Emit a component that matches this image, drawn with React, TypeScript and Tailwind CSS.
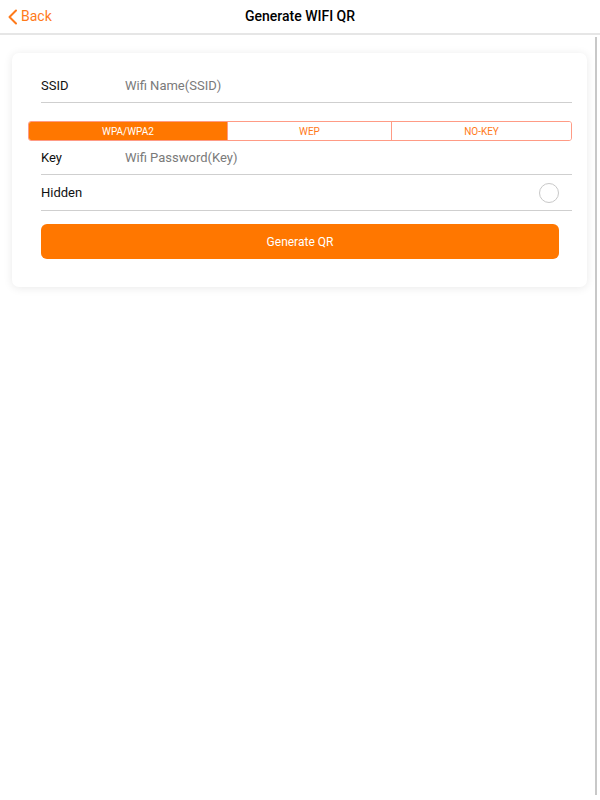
import React, { useState } from "react";

const ORANGE = "#ff7700";

export default function App() {
  const [mode, setMode] = useState("WPA/WPA2");
  const [hidden, setHidden] = useState(false);
  const modes = ["WPA/WPA2", "WEP", "NO-KEY"];

  return (
    <div className="w-[600px] h-[800px] bg-white font-['Roboto','Noto_Sans',sans-serif] flex flex-col overflow-hidden">
      {/* Nav bar */}
      <header className="relative h-[35px] shrink-0 flex items-center border-b-2 border-[#e6e6e6] bg-white">
        <button className="flex items-center pl-[7px] text-[#ff7a1a] text-[14px]">
          <svg width="11" height="16" viewBox="0 0 11 16" className="mr-[3px]">
            <path d="M9 1.5 L2.5 8 L9 14.5" fill="none" stroke="#ff7a1a" strokeWidth="2" strokeLinecap="round" strokeLinejoin="round" />
          </svg>
          Back
        </button>
        <h1 className="absolute left-0 right-0 text-center text-[14px] font-medium text-black pointer-events-none">
          Generate WIFI QR
        </h1>
      </header>

      {/* Body */}
      <div className="flex-1 flex">
        <main className="flex-1 pt-[18px] pl-[12px] pr-[8px]">
          <div className="bg-white rounded-[7px] shadow-[0_1px_10px_rgba(0,0,0,0.09)] pt-[17px] pb-[28px]">
            <div className="ml-[29px] mr-[15px] h-[33px] flex items-center border-b border-[#cfcfcf] text-[13px]">
              <span className="w-[84px] text-[#111]">SSID</span>
              <input
                placeholder="Wifi Name(SSID)"
                className="flex-1 outline-none bg-transparent placeholder:text-[#7a7a7a]"
              />
            </div>

            <div className="ml-[16px] mr-[15px] mt-[18px] h-[20px] flex rounded-[3px] border border-[#ff9b85] overflow-hidden text-[10px]">
              {modes.map((m, i) => (
                <button
                  key={m}
                  onClick={() => setMode(m)}
                  className={
                    (i === 0 ? "w-[198px] " : i === 1 ? "w-[164px] border-l border-[#ff9b85] " : "flex-1 border-l border-[#ff9b85] ") +
                    (mode === m ? "bg-[#ff7700] text-white" : "bg-white text-[#ff7a1a]")
                  }
                >
                  {m}
                </button>
              ))}
            </div>

            <div className="ml-[29px] mr-[15px] h-[34px] flex items-center border-b border-[#cfcfcf] text-[13px]">
              <span className="w-[84px] text-[#111]">Key</span>
              <input
                placeholder="Wifi Password(Key)"
                className="flex-1 outline-none bg-transparent placeholder:text-[#7a7a7a]"
              />
            </div>

            <div className="ml-[29px] mr-[15px] h-[36px] flex items-center justify-between border-b border-[#cfcfcf] text-[13px]">
              <span className="text-[#111]">Hidden</span>
              <button
                onClick={() => setHidden(!hidden)}
                className={"w-[20px] h-[20px] mr-[13px] rounded-full border " + (hidden ? "bg-[#ff7700] border-[#ff7700]" : "border-[#c8c8c8]")}
              />
            </div>

            <button
              className="ml-[29px] mt-[13px] w-[518px] h-[35px] rounded-[6px] text-white text-[12px]"
              style={{ backgroundColor: ORANGE }}
            >
              Generate QR
            </button>
          </div>
        </main>
        {/* scroll indicator */}
        <div className="w-[5px] pt-[2px] pb-[5px] flex">
          <div className="w-[2px] bg-[#c8c8c8]" />
        </div>
      </div>
    </div>
  );
}
